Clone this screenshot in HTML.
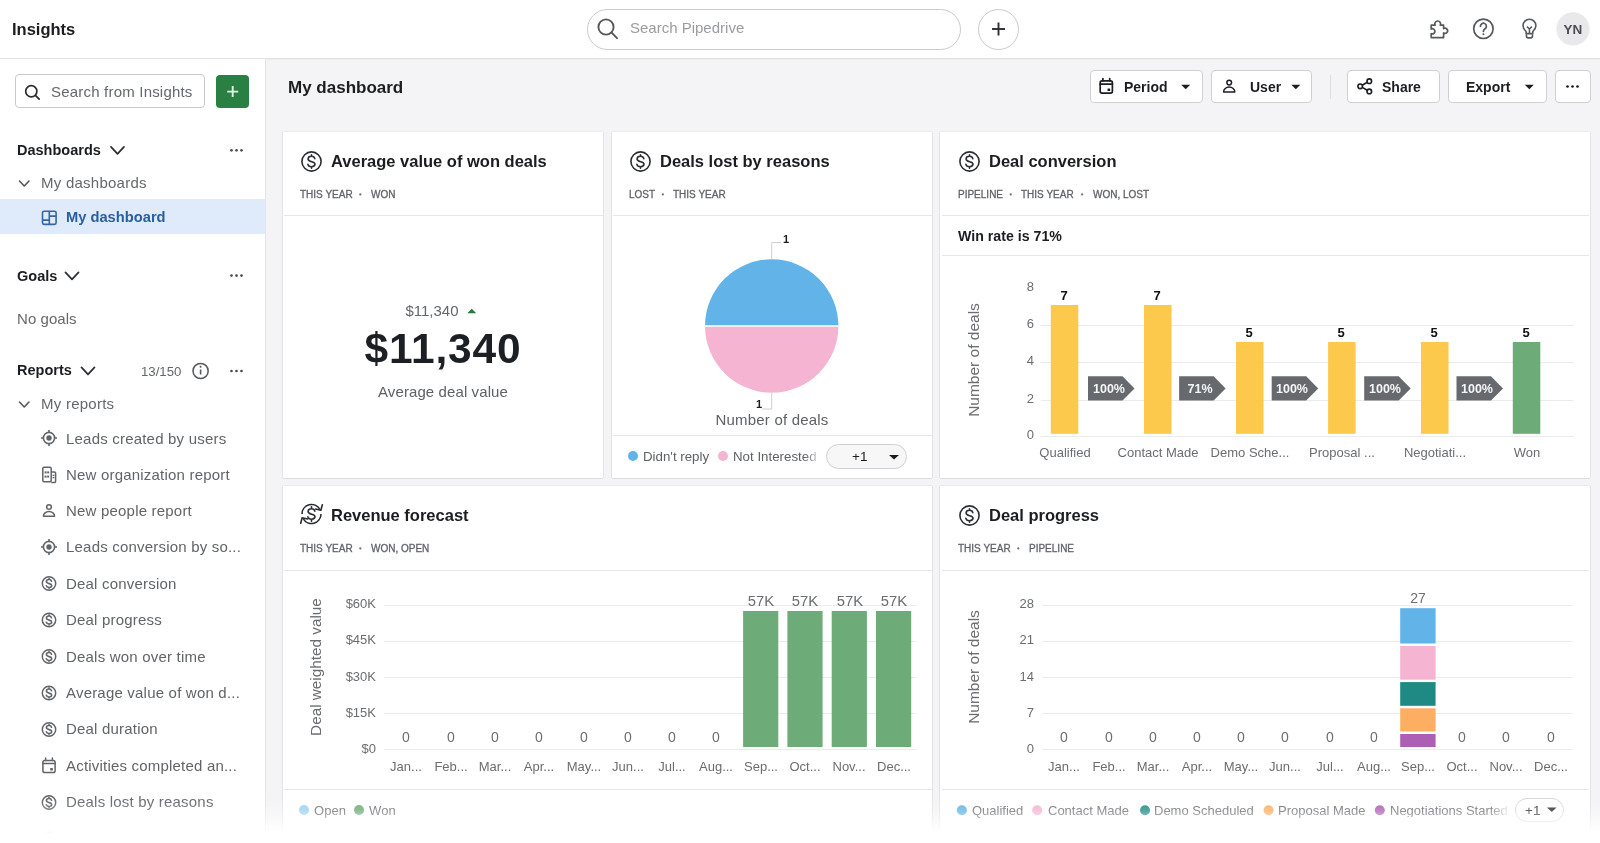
<!DOCTYPE html>
<html><head><meta charset="utf-8"><title>Insights</title>
<style>
html,body{margin:0;padding:0;width:1600px;height:843px;overflow:hidden;background:#f4f4f6;}
body{position:relative;font-family:"Liberation Sans", sans-serif;}
.t{position:absolute;line-height:1;white-space:nowrap;will-change:transform;}
svg.ov{position:absolute;left:0;top:0;}
</style></head><body>
<div style="position:absolute;left:0px;top:0px;width:1600px;height:843px;background:#f4f4f6;"></div>
<div style="position:absolute;left:0px;top:0px;width:1600px;height:58px;background:#fff;border-bottom:1px solid #e2e2e5;box-shadow:0 1px 1px rgba(0,0,0,0.03);"></div>
<div style="position:absolute;left:0px;top:59px;width:266px;height:784px;background:#fff;border-right:1px solid #e5e5e8;box-sizing:border-box;"></div>
<div style="position:absolute;left:587px;top:9px;width:374px;height:41px;border:1px solid #c9cacc;border-radius:21px;box-sizing:border-box;background:#fff;"></div>
<div style="position:absolute;left:977.5px;top:9px;width:41px;height:41px;border:1px solid #c9cacc;border-radius:50%;box-sizing:border-box;background:#fff;"></div>
<div style="position:absolute;left:15px;top:74px;width:190px;height:34px;border:1px solid #c9cacc;border-radius:4px;box-sizing:border-box;"></div>
<div style="position:absolute;left:216px;top:75px;width:33px;height:33px;background:#2a7f43;border-radius:4px;"></div>
<div style="position:absolute;left:0px;top:199px;width:265px;height:35px;background:#dfebfb;"></div>
<div style="position:absolute;left:1090px;top:70px;width:113px;height:33px;background:#fff;border:1px solid #cfd0d3;border-radius:4px;box-sizing:border-box;"></div>
<div style="position:absolute;left:1211px;top:70px;width:101px;height:33px;background:#fff;border:1px solid #cfd0d3;border-radius:4px;box-sizing:border-box;"></div>
<div style="position:absolute;left:1330px;top:75px;width:1px;height:24px;background:#dcdde0;"></div>
<div style="position:absolute;left:1347px;top:70px;width:93px;height:33px;background:#fff;border:1px solid #cfd0d3;border-radius:4px;box-sizing:border-box;"></div>
<div style="position:absolute;left:1448px;top:70px;width:99px;height:33px;background:#fff;border:1px solid #cfd0d3;border-radius:4px;box-sizing:border-box;"></div>
<div style="position:absolute;left:1554.5px;top:70px;width:36px;height:33px;background:#fff;border:1px solid #cfd0d3;border-radius:4px;box-sizing:border-box;"></div>
<div style="position:absolute;left:282px;top:131px;width:322px;height:348px;background:#fff;border:1px solid;border-color:#ececee #e4e4e6 #dedee0 #e4e4e6;border-radius:2px;box-sizing:border-box;"></div>
<div style="position:absolute;left:284px;top:215px;width:319px;height:1px;background:#e7e7e9;"></div>
<div style="position:absolute;left:611px;top:131px;width:322px;height:348px;background:#fff;border:1px solid;border-color:#ececee #e4e4e6 #dedee0 #e4e4e6;border-radius:2px;box-sizing:border-box;"></div>
<div style="position:absolute;left:613px;top:215px;width:319px;height:1px;background:#e7e7e9;"></div>
<div style="position:absolute;left:613px;top:435px;width:319px;height:1px;background:#e7e7e9;"></div>
<div style="position:absolute;left:826px;top:444px;width:81px;height:25px;border:1px solid #cfd0d3;border-radius:13px;box-sizing:border-box;background:#f7f7f8;"></div>
<div style="position:absolute;left:939px;top:131px;width:652px;height:348px;background:#fff;border:1px solid;border-color:#ececee #e4e4e6 #dedee0 #e4e4e6;border-radius:2px;box-sizing:border-box;"></div>
<div style="position:absolute;left:942px;top:215px;width:647px;height:1px;background:#e7e7e9;"></div>
<div style="position:absolute;left:942px;top:255px;width:647px;height:1px;background:#e7e7e9;"></div>
<div style="position:absolute;left:1041px;top:325.3px;width:533px;height:1px;background:#ebebed;"></div>
<div style="position:absolute;left:1041px;top:362.4px;width:533px;height:1px;background:#ebebed;"></div>
<div style="position:absolute;left:1041px;top:399.6px;width:533px;height:1px;background:#ebebed;"></div>
<div style="position:absolute;left:1041px;top:436.2px;width:533px;height:1px;background:#ebebed;"></div>
<div style="position:absolute;left:282px;top:485px;width:651px;height:358px;background:#fff;border:1px solid;border-color:#ececee #e4e4e6 #dedee0 #e4e4e6;border-radius:2px;box-sizing:border-box;"></div>
<div style="position:absolute;left:284px;top:570px;width:648px;height:1px;background:#e7e7e9;"></div>
<div style="position:absolute;left:384px;top:604.9px;width:531.6px;height:1px;background:#ebebed;"></div>
<div style="position:absolute;left:384px;top:641px;width:531.6px;height:1px;background:#ebebed;"></div>
<div style="position:absolute;left:384px;top:677.2px;width:531.6px;height:1px;background:#ebebed;"></div>
<div style="position:absolute;left:384px;top:713.3px;width:531.6px;height:1px;background:#ebebed;"></div>
<div style="position:absolute;left:384px;top:749.4px;width:531.6px;height:1px;background:#ebebed;"></div>
<div style="position:absolute;left:284px;top:789px;width:648px;height:1px;background:#e7e7e9;"></div>
<div style="position:absolute;left:939px;top:485px;width:652px;height:358px;background:#fff;border:1px solid;border-color:#ececee #e4e4e6 #dedee0 #e4e4e6;border-radius:2px;box-sizing:border-box;"></div>
<div style="position:absolute;left:942px;top:570px;width:647px;height:1px;background:#e7e7e9;"></div>
<div style="position:absolute;left:1042.4px;top:604.9px;width:530.0999999999999px;height:1px;background:#ebebed;"></div>
<div style="position:absolute;left:1042.4px;top:641px;width:530.0999999999999px;height:1px;background:#ebebed;"></div>
<div style="position:absolute;left:1042.4px;top:677.2px;width:530.0999999999999px;height:1px;background:#ebebed;"></div>
<div style="position:absolute;left:1042.4px;top:713.3px;width:530.0999999999999px;height:1px;background:#ebebed;"></div>
<div style="position:absolute;left:1042.4px;top:749.4px;width:530.0999999999999px;height:1px;background:#ebebed;"></div>
<div style="position:absolute;left:942px;top:789px;width:647px;height:1px;background:#e7e7e9;"></div>
<div style="position:absolute;left:1515px;top:798px;width:49px;height:24px;border:1px solid #d6d7da;border-radius:12px;box-sizing:border-box;background:#fff;"></div>
<svg class="ov" width="1600" height="843" viewBox="0 0 1600 843">
<circle cx="606" cy="27" r="7.6" fill="none" stroke="#55585c" stroke-width="1.9"/>
<line x1="611.6" y1="32.6" x2="617" y2="38.2" stroke="#55585c" stroke-width="1.9" stroke-linecap="round"/>
<line x1="992" y1="29" x2="1005" y2="29" stroke="#2a2d31" stroke-width="1.9"/>
<line x1="998.5" y1="22.5" x2="998.5" y2="35.5" stroke="#2a2d31" stroke-width="1.9"/>
<path d="M1431.2 25.2 H1435.1 A2.9 2.9 0 1 1 1440.3 25.2 H1443.6 V28.6 A2.6 2.6 0 1 1 1443.6 33.0 V37.6 H1431.2 V33.7 A2.6 2.6 0 1 0 1431.2 29 Z" fill="none" stroke="#55585c" stroke-width="1.7" stroke-linejoin="round"/>
<circle cx="1483.4" cy="28.8" r="9.7" fill="none" stroke="#55585c" stroke-width="1.7"/>
<path d="M1480.4 26.3 a3 3 0 1 1 4.6 2.5 c-1.2 0.8 -1.6 1.3 -1.6 2.6" fill="none" stroke="#55585c" stroke-width="1.7" stroke-linecap="round"/>
<circle cx="1483.4" cy="34.3" r="1" fill="#55585c"/>
<path d="M1526.1 33.6 v-2.1 c-1.9 -1.7 -3.1 -3.5 -3.1 -5.8 a6.45 6.45 0 0 1 12.9 0 c0 2.3 -1.2 4.1 -3.1 5.8 v2.1 z" fill="none" stroke="#55585c" stroke-width="1.6" stroke-linejoin="round"/>
<path d="M1526.4 34.2 v1.9 a1.8 1.8 0 0 0 1.8 1.8 h2.5 a1.8 1.8 0 0 0 1.8 -1.8 v-1.9" fill="none" stroke="#55585c" stroke-width="1.6"/>
<path d="M1527 26.6 l2.45 2.4 l2.45 -2.4 M1529.45 29 v4.2" fill="none" stroke="#55585c" stroke-width="1.5"/>
<circle cx="1573" cy="28.9" r="16.6" fill="#e9e9eb"/>
<circle cx="31.3" cy="91.3" r="5.6" fill="none" stroke="#2a2d31" stroke-width="1.7"/>
<line x1="35.4" y1="95.4" x2="39.2" y2="99.2" stroke="#2a2d31" stroke-width="1.7" stroke-linecap="round"/>
<path d="M227.2 91.6 h11 M232.7 86.1 v11" stroke="#d9f5dd" stroke-width="1.9"/>
<path d="M111 146.8 l6.5 7 l6.5 -7" fill="none" stroke="#2a2d31" stroke-width="1.7" stroke-linecap="round" stroke-linejoin="round"/>
<circle cx="231.5" cy="150.3" r="1.35" fill="#4a4d52"/>
<circle cx="236.5" cy="150.3" r="1.35" fill="#4a4d52"/>
<circle cx="241.5" cy="150.3" r="1.35" fill="#4a4d52"/>
<path d="M19.5 181 l4.75 5 l4.75 -5" fill="none" stroke="#55585c" stroke-width="1.6" stroke-linecap="round" stroke-linejoin="round"/>
<rect x="42.5" y="211.2" width="13.6" height="13.2" rx="1.6" fill="none" stroke="#3565a5" stroke-width="1.6"/>
<path d="M49.3 211.2 v13.2 M42.5 220.1 h6.8 M49.3 216.1 h6.8" stroke="#3565a5" stroke-width="1.6"/>
<path d="M65.5 272.3 l6.5 7 l6.5 -7" fill="none" stroke="#2a2d31" stroke-width="1.7" stroke-linecap="round" stroke-linejoin="round"/>
<circle cx="231.5" cy="275.6" r="1.35" fill="#4a4d52"/>
<circle cx="236.5" cy="275.6" r="1.35" fill="#4a4d52"/>
<circle cx="241.5" cy="275.6" r="1.35" fill="#4a4d52"/>
<path d="M81.5 367.3 l6.5 7 l6.5 -7" fill="none" stroke="#2a2d31" stroke-width="1.7" stroke-linecap="round" stroke-linejoin="round"/>
<circle cx="200.6" cy="371" r="7.6" fill="none" stroke="#55585c" stroke-width="1.5"/>
<path d="M200.6 369.5 v5" stroke="#55585c" stroke-width="1.6"/><circle cx="200.6" cy="366.7" r="1" fill="#55585c"/>
<circle cx="231.5" cy="371" r="1.35" fill="#4a4d52"/>
<circle cx="236.5" cy="371" r="1.35" fill="#4a4d52"/>
<circle cx="241.5" cy="371" r="1.35" fill="#4a4d52"/>
<path d="M19.5 402 l4.75 5 l4.75 -5" fill="none" stroke="#55585c" stroke-width="1.6" stroke-linecap="round" stroke-linejoin="round"/>
<circle cx="49" cy="438" r="5.6" fill="none" stroke="#616469" stroke-width="1.6"/>
<circle cx="49" cy="438" r="2.7" fill="#616469"/>
<path d="M49 430 v2.4 M49 443.6 v2.4 M41 438 h2.4 M54.6 438 h2.4" stroke="#616469" stroke-width="1.6"/>
<rect x="42.8" y="467.2" width="8.4" height="14.6" rx="1.2" fill="none" stroke="#616469" stroke-width="1.5"/>
<path d="M51.2 471.9 h3.2 a1.2 1.2 0 0 1 1.2 1.2 v8.2 a1.2 1.2 0 0 1 -1.2 1.2 h-3.2" fill="none" stroke="#616469" stroke-width="1.5"/>
<rect x="44.599999999999994" y="471.40000000000003" width="2" height="2" fill="#616469"/>
<rect x="47.199999999999996" y="471.40000000000003" width="2" height="2" fill="#616469"/>
<rect x="44.599999999999994" y="475.6" width="2" height="2" fill="#616469"/>
<rect x="47.199999999999996" y="475.6" width="2" height="2" fill="#616469"/>
<path d="M52.6 475.4 h1.8 M52.6 477.6 h1.8" stroke="#616469" stroke-width="1.1"/>
<circle cx="49" cy="507" r="2.35" fill="none" stroke="#616469" stroke-width="1.5"/>
<path d="M43.4 516.3 a5.6 4.9 0 0 1 11.2 0 z" fill="none" stroke="#616469" stroke-width="1.5" stroke-linejoin="round"/>
<circle cx="49" cy="547" r="5.6" fill="none" stroke="#616469" stroke-width="1.6"/>
<circle cx="49" cy="547" r="2.7" fill="#616469"/>
<path d="M49 539 v2.4 M49 552.6 v2.4 M41 547 h2.4 M54.6 547 h2.4" stroke="#616469" stroke-width="1.6"/>
<circle cx="49" cy="583.5" r="6.7" fill="none" stroke="#616469" stroke-width="1.5"/>
<path d="M51.51 581.30 C51.28 580.23 50.37 579.55 49.00 579.55 C47.48 579.55 46.42 580.38 46.42 581.52 C46.42 584.18 51.66 583.12 51.66 585.48 C51.66 586.69 50.52 587.45 49.00 587.45 C47.56 587.45 46.49 586.77 46.26 585.70 M49.00 579.55 L49.00 578.41 M49.00 587.45 L49.00 588.59" fill="none" stroke="#616469" stroke-width="1.6" stroke-linecap="round" stroke-linejoin="round"/>
<circle cx="49" cy="620" r="6.7" fill="none" stroke="#616469" stroke-width="1.5"/>
<path d="M51.51 617.80 C51.28 616.73 50.37 616.05 49.00 616.05 C47.48 616.05 46.42 616.88 46.42 618.02 C46.42 620.68 51.66 619.62 51.66 621.98 C51.66 623.19 50.52 623.95 49.00 623.95 C47.56 623.95 46.49 623.27 46.26 622.20 M49.00 616.05 L49.00 614.91 M49.00 623.95 L49.00 625.09" fill="none" stroke="#616469" stroke-width="1.6" stroke-linecap="round" stroke-linejoin="round"/>
<circle cx="49" cy="656.5" r="6.7" fill="none" stroke="#616469" stroke-width="1.5"/>
<path d="M51.51 654.30 C51.28 653.23 50.37 652.55 49.00 652.55 C47.48 652.55 46.42 653.38 46.42 654.52 C46.42 657.18 51.66 656.12 51.66 658.48 C51.66 659.69 50.52 660.45 49.00 660.45 C47.56 660.45 46.49 659.77 46.26 658.70 M49.00 652.55 L49.00 651.41 M49.00 660.45 L49.00 661.59" fill="none" stroke="#616469" stroke-width="1.6" stroke-linecap="round" stroke-linejoin="round"/>
<circle cx="49" cy="693" r="6.7" fill="none" stroke="#616469" stroke-width="1.5"/>
<path d="M51.51 690.80 C51.28 689.73 50.37 689.05 49.00 689.05 C47.48 689.05 46.42 689.88 46.42 691.02 C46.42 693.68 51.66 692.62 51.66 694.98 C51.66 696.19 50.52 696.95 49.00 696.95 C47.56 696.95 46.49 696.27 46.26 695.20 M49.00 689.05 L49.00 687.91 M49.00 696.95 L49.00 698.09" fill="none" stroke="#616469" stroke-width="1.6" stroke-linecap="round" stroke-linejoin="round"/>
<circle cx="49" cy="729.5" r="6.7" fill="none" stroke="#616469" stroke-width="1.5"/>
<path d="M51.51 727.30 C51.28 726.23 50.37 725.55 49.00 725.55 C47.48 725.55 46.42 726.38 46.42 727.52 C46.42 730.18 51.66 729.12 51.66 731.48 C51.66 732.69 50.52 733.45 49.00 733.45 C47.56 733.45 46.49 732.77 46.26 731.70 M49.00 725.55 L49.00 724.41 M49.00 733.45 L49.00 734.59" fill="none" stroke="#616469" stroke-width="1.6" stroke-linecap="round" stroke-linejoin="round"/>
<rect x="42.9" y="760.4" width="12.2" height="12.2" rx="1.8" fill="none" stroke="#616469" stroke-width="1.5"/>
<path d="M42.9 763.6 h12.2 M45.6 758.1 v2.4 M52.4 758.1 v2.4" stroke="#616469" stroke-width="1.5" stroke-linecap="round"/>
<rect x="50.2" y="767.9" width="2.7" height="2.6" rx="0.5" fill="#616469"/>
<circle cx="49" cy="802.5" r="6.7" fill="none" stroke="#616469" stroke-width="1.5"/>
<path d="M51.51 800.30 C51.28 799.23 50.37 798.55 49.00 798.55 C47.48 798.55 46.42 799.38 46.42 800.52 C46.42 803.18 51.66 802.12 51.66 804.48 C51.66 805.69 50.52 806.45 49.00 806.45 C47.56 806.45 46.49 805.77 46.26 804.70 M49.00 798.55 L49.00 797.41 M49.00 806.45 L49.00 807.59" fill="none" stroke="#616469" stroke-width="1.6" stroke-linecap="round" stroke-linejoin="round"/>
<circle cx="49" cy="839" r="6.7" fill="none" stroke="#616469" stroke-width="1.5"/>
<path d="M51.51 836.80 C51.28 835.73 50.37 835.05 49.00 835.05 C47.48 835.05 46.42 835.88 46.42 837.02 C46.42 839.68 51.66 838.62 51.66 840.98 C51.66 842.19 50.52 842.95 49.00 842.95 C47.56 842.95 46.49 842.27 46.26 841.20 M49.00 835.05 L49.00 833.91 M49.00 842.95 L49.00 844.09" fill="none" stroke="#616469" stroke-width="1.6" stroke-linecap="round" stroke-linejoin="round"/>
<rect x="1100.2" y="80.9" width="12.2" height="12.2" rx="1.8" fill="none" stroke="#1b1d21" stroke-width="1.7"/>
<path d="M1100.2 84.1 h12.2 M1102.8999999999999 78.6 v2.4 M1109.7 78.6 v2.4" stroke="#1b1d21" stroke-width="1.7" stroke-linecap="round"/>
<rect x="1107.5" y="88.4" width="2.7" height="2.6" rx="0.5" fill="#1b1d21"/>
<path d="M1181.2 84.8 h9 l-4.5 4.5 z" fill="#1b1d21"/>
<circle cx="1229.2" cy="82.6" r="2.35" fill="none" stroke="#1b1d21" stroke-width="1.5"/>
<path d="M1223.6000000000001 91.89999999999999 a5.6 4.9 0 0 1 11.2 0 z" fill="none" stroke="#1b1d21" stroke-width="1.5" stroke-linejoin="round"/>
<path d="M1291.3 84.8 h9 l-4.5 4.5 z" fill="#1b1d21"/>
<circle cx="1360.2" cy="86.3" r="2.3" fill="none" stroke="#1b1d21" stroke-width="1.6"/><circle cx="1369.3" cy="81.2" r="2.3" fill="none" stroke="#1b1d21" stroke-width="1.6"/><circle cx="1369.3" cy="91.4" r="2.3" fill="none" stroke="#1b1d21" stroke-width="1.6"/><path d="M1362.2 85.2 l5.1 -2.9 M1362.2 87.4 l5.1 2.9" stroke="#1b1d21" stroke-width="1.6"/>
<path d="M1524.8 84.8 h9 l-4.5 4.5 z" fill="#1b1d21"/>
<circle cx="1567.5" cy="86.5" r="1.35" fill="#1b1d21"/>
<circle cx="1572.5" cy="86.5" r="1.35" fill="#1b1d21"/>
<circle cx="1577.5" cy="86.5" r="1.35" fill="#1b1d21"/>
<circle cx="311.5" cy="161.5" r="9.6" fill="none" stroke="#2a2d31" stroke-width="1.6"/>
<path d="M314.80 158.60 C314.50 157.20 313.30 156.30 311.50 156.30 C309.50 156.30 308.10 157.40 308.10 158.90 C308.10 162.40 315.00 161.00 315.00 164.10 C315.00 165.70 313.50 166.70 311.50 166.70 C309.60 166.70 308.20 165.80 307.90 164.40 M311.50 156.30 L311.50 154.80 M311.50 166.70 L311.50 168.20" fill="none" stroke="#2a2d31" stroke-width="1.6" stroke-linecap="round" stroke-linejoin="round"/>
<circle cx="360.31" cy="194.4" r="1.1" fill="#6d7075"/>
<path d="M467.3 313.2 l4.45 -4.5 l4.45 4.5 z" fill="#1f7a3c"/>
<circle cx="640.5" cy="161.5" r="9.6" fill="none" stroke="#2a2d31" stroke-width="1.6"/>
<path d="M643.80 158.60 C643.50 157.20 642.30 156.30 640.50 156.30 C638.50 156.30 637.10 157.40 637.10 158.90 C637.10 162.40 644.00 161.00 644.00 164.10 C644.00 165.70 642.50 166.70 640.50 166.70 C638.60 166.70 637.20 165.80 636.90 164.40 M640.50 156.30 L640.50 154.80 M640.50 166.70 L640.50 168.20" fill="none" stroke="#2a2d31" stroke-width="1.6" stroke-linecap="round" stroke-linejoin="round"/>
<circle cx="662.83" cy="194.4" r="1.1" fill="#6d7075"/>
<path d="M705 326 A66.7 66.7 0 0 1 838.4 326 z" fill="#62b3e7"/>
<path d="M705 326 A66.7 66.7 0 0 0 838.4 326 z" fill="#f4b4d2"/>
<line x1="705" y1="326" x2="838.4" y2="326" stroke="#fff" stroke-width="1.5"/>
<path d="M771.7 259 v-16.5 h9.5" fill="none" stroke="#cfd0d2" stroke-width="1"/>
<path d="M771.7 393 v16 h-9.5" fill="none" stroke="#cfd0d2" stroke-width="1"/>
<circle cx="633" cy="456" r="5" fill="#62b3e7"/><circle cx="723" cy="456" r="5" fill="#f4b4d2"/>
<path d="M889 455 h10 l-5.0 4.6 z" fill="#1b1d21"/>
<circle cx="969.5" cy="161.5" r="9.6" fill="none" stroke="#2a2d31" stroke-width="1.6"/>
<path d="M972.80 158.60 C972.50 157.20 971.30 156.30 969.50 156.30 C967.50 156.30 966.10 157.40 966.10 158.90 C966.10 162.40 973.00 161.00 973.00 164.10 C973.00 165.70 971.50 166.70 969.50 166.70 C967.60 166.70 966.20 165.80 965.90 164.40 M969.50 156.30 L969.50 154.80 M969.50 166.70 L969.50 168.20" fill="none" stroke="#2a2d31" stroke-width="1.6" stroke-linecap="round" stroke-linejoin="round"/>
<circle cx="1010.73" cy="194.4" r="1.1" fill="#6d7075"/>
<circle cx="1082.14" cy="194.4" r="1.1" fill="#6d7075"/>
<rect x="1050.8" y="305" width="27.5" height="128.8" fill="#fcc94c"/>
<rect x="1144" y="305" width="27.5" height="128.8" fill="#fcc94c"/>
<rect x="1236" y="342" width="27.5" height="91.80000000000001" fill="#fcc94c"/>
<rect x="1328.1" y="342" width="27.5" height="91.80000000000001" fill="#fcc94c"/>
<rect x="1421" y="342" width="27.5" height="91.80000000000001" fill="#fcc94c"/>
<rect x="1512.8" y="342" width="27.5" height="91.80000000000001" fill="#6dab78"/>
<path d="M1088 376.3 h34.5 l12 12.1 l-12 12.1 h-34.5 z" fill="#66696d"/>
<path d="M1179.1 376.3 h34.5 l12 12.1 l-12 12.1 h-34.5 z" fill="#66696d"/>
<path d="M1271.7 376.3 h34.5 l12 12.1 l-12 12.1 h-34.5 z" fill="#66696d"/>
<path d="M1364.2 376.3 h34.5 l12 12.1 l-12 12.1 h-34.5 z" fill="#66696d"/>
<path d="M1456.5 376.3 h34.5 l12 12.1 l-12 12.1 h-34.5 z" fill="#66696d"/>
<path d="M302.0 514 A9.5 9.5 0 0 1 319.8 509.4" fill="none" stroke="#2a2d31" stroke-width="1.6"/>
<path d="M321.0 514 A9.5 9.5 0 0 1 303.2 518.6" fill="none" stroke="#2a2d31" stroke-width="1.6"/>
<path d="M322.3 504.7 L320.9 510.2 L315.5 509.0" fill="none" stroke="#2a2d31" stroke-width="1.6" stroke-linejoin="round" stroke-linecap="round"/>
<path d="M300.7 523.3 L302.1 517.8 L307.5 519.0" fill="none" stroke="#2a2d31" stroke-width="1.6" stroke-linejoin="round" stroke-linecap="round"/>
<path d="M314.80 511.10 C314.50 509.70 313.30 508.80 311.50 508.80 C309.50 508.80 308.10 509.90 308.10 511.40 C308.10 514.90 315.00 513.50 315.00 516.60 C315.00 518.20 313.50 519.20 311.50 519.20 C309.60 519.20 308.20 518.30 307.90 516.90 M311.50 508.80 L311.50 506.80 M311.50 519.20 L311.50 521.20" fill="none" stroke="#2a2d31" stroke-width="1.6" stroke-linecap="round" stroke-linejoin="round"/>
<circle cx="360.31" cy="548.4" r="1.1" fill="#6d7075"/>
<rect x="743.1" y="611" width="35.2" height="136" fill="#6dab78"/>
<rect x="787.4" y="611" width="35.2" height="136" fill="#6dab78"/>
<rect x="831.6999999999999" y="611" width="35.2" height="136" fill="#6dab78"/>
<rect x="875.9999999999999" y="611" width="35.2" height="136" fill="#6dab78"/>
<circle cx="304" cy="810" r="5" fill="#9fd0f3"/><circle cx="359" cy="810" r="5" fill="#6dab78"/>
<circle cx="969.5" cy="515.5" r="9.6" fill="none" stroke="#2a2d31" stroke-width="1.6"/>
<path d="M972.80 512.60 C972.50 511.20 971.30 510.30 969.50 510.30 C967.50 510.30 966.10 511.40 966.10 512.90 C966.10 516.40 973.00 515.00 973.00 518.10 C973.00 519.70 971.50 520.70 969.50 520.70 C967.60 520.70 966.20 519.80 965.90 518.40 M969.50 510.30 L969.50 508.80 M969.50 520.70 L969.50 522.20" fill="none" stroke="#2a2d31" stroke-width="1.6" stroke-linecap="round" stroke-linejoin="round"/>
<circle cx="1018.31" cy="548.4" r="1.1" fill="#6d7075"/>
<rect x="1400.2" y="608.2" width="35.4" height="35.3" fill="#62b3e7"/>
<rect x="1400.2" y="646" width="35.4" height="33.7" fill="#f4b4d2"/>
<rect x="1400.2" y="682.1" width="35.4" height="23.7" fill="#1f8a84"/>
<rect x="1400.2" y="708.3" width="35.4" height="23.2" fill="#fcae63"/>
<rect x="1400.2" y="734" width="35.4" height="13.0" fill="#ad5fb6"/>
<circle cx="961.9" cy="810.3" r="5" fill="#62b3e7"/>
<circle cx="1037.2" cy="810.3" r="5" fill="#f4b4d2"/>
<circle cx="1145" cy="810.3" r="5" fill="#1f8a84"/>
<circle cx="1268.6" cy="810.3" r="5" fill="#fcae63"/>
<circle cx="1379.8" cy="810.3" r="5" fill="#ad5fb6"/>
<path d="M1547 807.5 h9.5 l-4.75 4.5 z" fill="#2a2d31"/>
</svg>
<div class="t" style="top:21.00px;font-size:16.5px;font-weight:bold;color:#1b1d21;left:11.80px;">Insights</div>
<div class="t" style="top:20.30px;font-size:15px;font-weight:normal;color:#9a9ca0;left:629.50px;">Search Pipedrive</div>
<div class="t" style="top:23.00px;font-size:13.5px;font-weight:bold;color:#4a4d52;left:1273.20px;width:600px;text-align:center;">YN</div>
<div class="t" style="top:84.30px;font-size:15px;font-weight:normal;color:#65686c;letter-spacing:0.2px;left:50.50px;">Search from Insights</div>
<div class="t" style="top:143.00px;font-size:14.5px;font-weight:bold;color:#1b1d21;left:16.50px;">Dashboards</div>
<div class="t" style="top:175.30px;font-size:15px;font-weight:normal;color:#65686c;letter-spacing:0.25px;left:41.20px;">My dashboards</div>
<div class="t" style="top:210.00px;font-size:14.7px;font-weight:bold;color:#2a5f9f;left:66.20px;">My dashboard</div>
<div class="t" style="top:269.00px;font-size:14.5px;font-weight:bold;color:#1b1d21;left:16.50px;">Goals</div>
<div class="t" style="top:311.30px;font-size:15px;font-weight:normal;color:#65686c;letter-spacing:0.05px;left:16.50px;">No goals</div>
<div class="t" style="top:363.00px;font-size:14.5px;font-weight:bold;color:#1b1d21;left:16.50px;">Reports</div>
<div class="t" style="top:365.00px;font-size:13.2px;font-weight:normal;color:#65686c;left:140.50px;">13/150</div>
<div class="t" style="top:396.30px;font-size:15px;font-weight:normal;color:#65686c;letter-spacing:0.25px;left:41.30px;">My reports</div>
<div class="t" style="top:431.30px;font-size:15px;font-weight:normal;color:#616468;letter-spacing:0.2px;left:66.30px;">Leads created by users</div>
<div class="t" style="top:467.30px;font-size:15px;font-weight:normal;color:#616468;letter-spacing:0.2px;left:66.30px;">New organization report</div>
<div class="t" style="top:503.30px;font-size:15px;font-weight:normal;color:#616468;letter-spacing:0.2px;left:66.30px;">New people report</div>
<div class="t" style="top:539.30px;font-size:15px;font-weight:normal;color:#616468;letter-spacing:0.2px;left:66.30px;">Leads conversion by so...</div>
<div class="t" style="top:576.30px;font-size:15px;font-weight:normal;color:#616468;letter-spacing:0.2px;left:66.30px;">Deal conversion</div>
<div class="t" style="top:612.30px;font-size:15px;font-weight:normal;color:#616468;letter-spacing:0.2px;left:66.30px;">Deal progress</div>
<div class="t" style="top:649.30px;font-size:15px;font-weight:normal;color:#616468;letter-spacing:0.2px;left:66.30px;">Deals won over time</div>
<div class="t" style="top:685.30px;font-size:15px;font-weight:normal;color:#616468;letter-spacing:0.2px;left:66.30px;">Average value of won d...</div>
<div class="t" style="top:721.30px;font-size:15px;font-weight:normal;color:#616468;letter-spacing:0.2px;left:66.30px;">Deal duration</div>
<div class="t" style="top:758.30px;font-size:15px;font-weight:normal;color:#616468;letter-spacing:0.2px;left:66.30px;">Activities completed an...</div>
<div class="t" style="top:794.30px;font-size:15px;font-weight:normal;color:#616468;letter-spacing:0.2px;left:66.30px;">Deals lost by reasons</div>
<div class="t" style="top:830.30px;font-size:15px;font-weight:normal;color:#616468;letter-spacing:0.2px;left:66.30px;">Deals won by users</div>
<div class="t" style="top:78.61px;font-size:17px;font-weight:bold;color:#1b1d21;left:288.00px;">My dashboard</div>
<div class="t" style="top:80.15px;font-size:14px;font-weight:bold;color:#1b1d21;left:1124.00px;">Period</div>
<div class="t" style="top:80.15px;font-size:14px;font-weight:bold;color:#1b1d21;left:1250.20px;">User</div>
<div class="t" style="top:80.15px;font-size:14px;font-weight:bold;color:#1b1d21;left:1381.60px;">Share</div>
<div class="t" style="top:80.15px;font-size:14px;font-weight:bold;color:#1b1d21;left:1466.10px;">Export</div>
<div class="t" style="top:153.00px;font-size:16.5px;font-weight:bold;color:#1b1d21;left:331.00px;">Average value of won deals</div>
<div class="t" style="top:189.53px;font-size:10px;font-weight:normal;color:#5f6267;left:299.50px;-webkit-text-stroke:0.3px #62656a;">THIS YEAR</div>
<div class="t" style="top:189.53px;font-size:10px;font-weight:normal;color:#5f6267;left:370.91px;-webkit-text-stroke:0.3px #62656a;">WON</div>
<div class="t" style="top:303.30px;font-size:15px;font-weight:normal;color:#63666b;left:132.00px;width:600px;text-align:center;">$11,340</div>
<div class="t" style="top:328.00px;font-size:42.5px;font-weight:bold;color:#1c1f24;letter-spacing:0.8px;left:142.90px;width:600px;text-align:center;">$11,340</div>
<div class="t" style="top:384.30px;font-size:15px;font-weight:normal;color:#5e6166;letter-spacing:0.1px;left:142.85px;width:600px;text-align:center;">Average deal value</div>
<div class="t" style="top:153.00px;font-size:16.5px;font-weight:bold;color:#1b1d21;left:660.00px;">Deals lost by reasons</div>
<div class="t" style="top:189.53px;font-size:10px;font-weight:normal;color:#5f6267;left:628.50px;-webkit-text-stroke:0.3px #62656a;">LOST</div>
<div class="t" style="top:189.53px;font-size:10px;font-weight:normal;color:#5f6267;left:673.42px;-webkit-text-stroke:0.3px #62656a;">THIS YEAR</div>
<div class="t" style="top:233.69px;font-size:11px;font-weight:bold;color:#1b1d21;left:782.80px;">1</div>
<div class="t" style="top:398.69px;font-size:11px;font-weight:bold;color:#1b1d21;left:756.00px;">1</div>
<div class="t" style="top:412.30px;font-size:15px;font-weight:normal;color:#5e6166;letter-spacing:0.2px;left:471.60px;width:600px;text-align:center;">Number of deals</div>
<div class="t" style="top:450.00px;font-size:13.3px;font-weight:normal;color:#5e6166;left:642.60px;">Didn't reply</div>
<div class="t" style="top:450.00px;font-size:13.3px;font-weight:normal;color:#5e6166;left:733.40px;-webkit-mask-image:linear-gradient(to right,#000 72px,rgba(0,0,0,0.25) 85px);">Not Interested</div>
<div class="t" style="top:450.00px;font-size:13.5px;font-weight:normal;color:#1b1d21;left:852.00px;">+1</div>
<div class="t" style="top:153.00px;font-size:16.5px;font-weight:bold;color:#1b1d21;left:989.00px;">Deal conversion</div>
<div class="t" style="top:189.53px;font-size:10px;font-weight:normal;color:#5f6267;left:957.50px;-webkit-text-stroke:0.3px #62656a;">PIPELINE</div>
<div class="t" style="top:189.53px;font-size:10px;font-weight:normal;color:#5f6267;left:1021.33px;-webkit-text-stroke:0.3px #62656a;">THIS YEAR</div>
<div class="t" style="top:189.53px;font-size:10px;font-weight:normal;color:#5f6267;left:1092.74px;-webkit-text-stroke:0.3px #62656a;">WON, LOST</div>
<div class="t" style="top:229.00px;font-size:14.2px;font-weight:bold;color:#1b1d21;left:957.60px;">Win rate is 71%</div>
<div class="t" style="top:279.99px;font-size:13px;font-weight:normal;color:#6a6d71;left:434.20px;width:600px;text-align:right;">8</div>
<div class="t" style="top:316.99px;font-size:13px;font-weight:normal;color:#6a6d71;left:434.20px;width:600px;text-align:right;">6</div>
<div class="t" style="top:353.99px;font-size:13px;font-weight:normal;color:#6a6d71;left:434.20px;width:600px;text-align:right;">4</div>
<div class="t" style="top:391.99px;font-size:13px;font-weight:normal;color:#6a6d71;left:434.20px;width:600px;text-align:right;">2</div>
<div class="t" style="top:427.99px;font-size:13px;font-weight:normal;color:#6a6d71;left:434.20px;width:600px;text-align:right;">0</div>
<div class="t" style="left:873.7px;top:351px;width:200px;text-align:center;font-size:15.5px;line-height:18px;color:#6a6d71;transform:rotate(-90deg);">Number of deals</div>
<div class="t" style="top:288.99px;font-size:13px;font-weight:bold;color:#111;left:764.05px;width:600px;text-align:center;">7</div>
<div class="t" style="top:445.99px;font-size:13px;font-weight:normal;color:#6a6d71;left:764.55px;width:600px;text-align:center;">Qualified</div>
<div class="t" style="top:288.99px;font-size:13px;font-weight:bold;color:#111;left:857.25px;width:600px;text-align:center;">7</div>
<div class="t" style="top:445.99px;font-size:13px;font-weight:normal;color:#6a6d71;left:857.75px;width:600px;text-align:center;">Contact Made</div>
<div class="t" style="top:325.99px;font-size:13px;font-weight:bold;color:#111;left:949.25px;width:600px;text-align:center;">5</div>
<div class="t" style="top:445.99px;font-size:13px;font-weight:normal;color:#6a6d71;left:949.75px;width:600px;text-align:center;">Demo Sche...</div>
<div class="t" style="top:325.99px;font-size:13px;font-weight:bold;color:#111;left:1041.35px;width:600px;text-align:center;">5</div>
<div class="t" style="top:445.99px;font-size:13px;font-weight:normal;color:#6a6d71;left:1041.85px;width:600px;text-align:center;">Proposal ...</div>
<div class="t" style="top:325.99px;font-size:13px;font-weight:bold;color:#111;left:1134.25px;width:600px;text-align:center;">5</div>
<div class="t" style="top:445.99px;font-size:13px;font-weight:normal;color:#6a6d71;left:1134.75px;width:600px;text-align:center;">Negotiati...</div>
<div class="t" style="top:325.99px;font-size:13px;font-weight:bold;color:#111;left:1226.05px;width:600px;text-align:center;">5</div>
<div class="t" style="top:445.99px;font-size:13px;font-weight:normal;color:#6a6d71;left:1226.55px;width:600px;text-align:center;">Won</div>
<div class="t" style="top:383.00px;font-size:12.5px;font-weight:bold;color:#f6f6f7;left:808.50px;width:600px;text-align:center;">100%</div>
<div class="t" style="top:383.00px;font-size:12.5px;font-weight:bold;color:#f6f6f7;left:899.60px;width:600px;text-align:center;">71%</div>
<div class="t" style="top:383.00px;font-size:12.5px;font-weight:bold;color:#f6f6f7;left:992.20px;width:600px;text-align:center;">100%</div>
<div class="t" style="top:383.00px;font-size:12.5px;font-weight:bold;color:#f6f6f7;left:1084.70px;width:600px;text-align:center;">100%</div>
<div class="t" style="top:383.00px;font-size:12.5px;font-weight:bold;color:#f6f6f7;left:1177.00px;width:600px;text-align:center;">100%</div>
<div class="t" style="top:507.00px;font-size:16.5px;font-weight:bold;color:#1b1d21;left:331.00px;">Revenue forecast</div>
<div class="t" style="top:543.53px;font-size:10px;font-weight:normal;color:#5f6267;left:299.50px;-webkit-text-stroke:0.3px #62656a;">THIS YEAR</div>
<div class="t" style="top:543.53px;font-size:10px;font-weight:normal;color:#5f6267;left:370.91px;-webkit-text-stroke:0.3px #62656a;">WON, OPEN</div>
<div class="t" style="top:596.99px;font-size:13px;font-weight:normal;color:#6a6d71;left:-224.30px;width:600px;text-align:right;">$60K</div>
<div class="t" style="top:632.99px;font-size:13px;font-weight:normal;color:#6a6d71;left:-224.30px;width:600px;text-align:right;">$45K</div>
<div class="t" style="top:669.99px;font-size:13px;font-weight:normal;color:#6a6d71;left:-224.30px;width:600px;text-align:right;">$30K</div>
<div class="t" style="top:705.99px;font-size:13px;font-weight:normal;color:#6a6d71;left:-224.30px;width:600px;text-align:right;">$15K</div>
<div class="t" style="top:741.99px;font-size:13px;font-weight:normal;color:#6a6d71;left:-224.30px;width:600px;text-align:right;">$0</div>
<div class="t" style="left:216.39999999999998px;top:658px;width:200px;text-align:center;font-size:15.3px;line-height:18px;color:#6a6d71;transform:rotate(-90deg);">Deal weighted value</div>
<div class="t" style="top:759.99px;font-size:13px;font-weight:normal;color:#6a6d71;left:106.30px;width:600px;text-align:center;">Jan...</div>
<div class="t" style="top:730.15px;font-size:14px;font-weight:normal;color:#6a6d71;left:106.30px;width:600px;text-align:center;">0</div>
<div class="t" style="top:759.99px;font-size:13px;font-weight:normal;color:#6a6d71;left:150.60px;width:600px;text-align:center;">Feb...</div>
<div class="t" style="top:730.15px;font-size:14px;font-weight:normal;color:#6a6d71;left:150.60px;width:600px;text-align:center;">0</div>
<div class="t" style="top:759.99px;font-size:13px;font-weight:normal;color:#6a6d71;left:194.90px;width:600px;text-align:center;">Mar...</div>
<div class="t" style="top:730.15px;font-size:14px;font-weight:normal;color:#6a6d71;left:194.90px;width:600px;text-align:center;">0</div>
<div class="t" style="top:759.99px;font-size:13px;font-weight:normal;color:#6a6d71;left:239.20px;width:600px;text-align:center;">Apr...</div>
<div class="t" style="top:730.15px;font-size:14px;font-weight:normal;color:#6a6d71;left:239.20px;width:600px;text-align:center;">0</div>
<div class="t" style="top:759.99px;font-size:13px;font-weight:normal;color:#6a6d71;left:283.50px;width:600px;text-align:center;">May...</div>
<div class="t" style="top:730.15px;font-size:14px;font-weight:normal;color:#6a6d71;left:283.50px;width:600px;text-align:center;">0</div>
<div class="t" style="top:759.99px;font-size:13px;font-weight:normal;color:#6a6d71;left:327.80px;width:600px;text-align:center;">Jun...</div>
<div class="t" style="top:730.15px;font-size:14px;font-weight:normal;color:#6a6d71;left:327.80px;width:600px;text-align:center;">0</div>
<div class="t" style="top:759.99px;font-size:13px;font-weight:normal;color:#6a6d71;left:372.10px;width:600px;text-align:center;">Jul...</div>
<div class="t" style="top:730.15px;font-size:14px;font-weight:normal;color:#6a6d71;left:372.10px;width:600px;text-align:center;">0</div>
<div class="t" style="top:759.99px;font-size:13px;font-weight:normal;color:#6a6d71;left:416.40px;width:600px;text-align:center;">Aug...</div>
<div class="t" style="top:730.15px;font-size:14px;font-weight:normal;color:#6a6d71;left:416.40px;width:600px;text-align:center;">0</div>
<div class="t" style="top:759.99px;font-size:13px;font-weight:normal;color:#6a6d71;left:460.70px;width:600px;text-align:center;">Sep...</div>
<div class="t" style="top:594.00px;font-size:14.8px;font-weight:normal;color:#6a6d71;left:461.00px;width:600px;text-align:center;">57K</div>
<div class="t" style="top:759.99px;font-size:13px;font-weight:normal;color:#6a6d71;left:505.00px;width:600px;text-align:center;">Oct...</div>
<div class="t" style="top:594.00px;font-size:14.8px;font-weight:normal;color:#6a6d71;left:505.30px;width:600px;text-align:center;">57K</div>
<div class="t" style="top:759.99px;font-size:13px;font-weight:normal;color:#6a6d71;left:549.30px;width:600px;text-align:center;">Nov...</div>
<div class="t" style="top:594.00px;font-size:14.8px;font-weight:normal;color:#6a6d71;left:549.60px;width:600px;text-align:center;">57K</div>
<div class="t" style="top:759.99px;font-size:13px;font-weight:normal;color:#6a6d71;left:593.60px;width:600px;text-align:center;">Dec...</div>
<div class="t" style="top:594.00px;font-size:14.8px;font-weight:normal;color:#6a6d71;left:593.90px;width:600px;text-align:center;">57K</div>
<div class="t" style="top:803.99px;font-size:13px;font-weight:normal;color:#6a6d71;letter-spacing:0.1px;left:314.10px;">Open</div>
<div class="t" style="top:803.99px;font-size:13px;font-weight:normal;color:#6a6d71;letter-spacing:0.1px;left:369.10px;">Won</div>
<div class="t" style="top:507.00px;font-size:16.5px;font-weight:bold;color:#1b1d21;left:989.00px;">Deal progress</div>
<div class="t" style="top:543.53px;font-size:10px;font-weight:normal;color:#5f6267;left:957.50px;-webkit-text-stroke:0.3px #62656a;">THIS YEAR</div>
<div class="t" style="top:543.53px;font-size:10px;font-weight:normal;color:#5f6267;left:1028.91px;-webkit-text-stroke:0.3px #62656a;">PIPELINE</div>
<div class="t" style="top:596.99px;font-size:13px;font-weight:normal;color:#6a6d71;left:433.70px;width:600px;text-align:right;">28</div>
<div class="t" style="top:632.99px;font-size:13px;font-weight:normal;color:#6a6d71;left:433.70px;width:600px;text-align:right;">21</div>
<div class="t" style="top:669.99px;font-size:13px;font-weight:normal;color:#6a6d71;left:433.70px;width:600px;text-align:right;">14</div>
<div class="t" style="top:705.99px;font-size:13px;font-weight:normal;color:#6a6d71;left:433.70px;width:600px;text-align:right;">7</div>
<div class="t" style="top:741.99px;font-size:13px;font-weight:normal;color:#6a6d71;left:433.70px;width:600px;text-align:right;">0</div>
<div class="t" style="left:874.4px;top:658px;width:200px;text-align:center;font-size:15.5px;line-height:18px;color:#6a6d71;transform:rotate(-90deg);">Number of deals</div>
<div class="t" style="top:759.99px;font-size:13px;font-weight:normal;color:#6a6d71;left:764.30px;width:600px;text-align:center;">Jan...</div>
<div class="t" style="top:730.15px;font-size:14px;font-weight:normal;color:#6a6d71;left:764.30px;width:600px;text-align:center;">0</div>
<div class="t" style="top:759.99px;font-size:13px;font-weight:normal;color:#6a6d71;left:808.50px;width:600px;text-align:center;">Feb...</div>
<div class="t" style="top:730.15px;font-size:14px;font-weight:normal;color:#6a6d71;left:808.50px;width:600px;text-align:center;">0</div>
<div class="t" style="top:759.99px;font-size:13px;font-weight:normal;color:#6a6d71;left:852.70px;width:600px;text-align:center;">Mar...</div>
<div class="t" style="top:730.15px;font-size:14px;font-weight:normal;color:#6a6d71;left:852.70px;width:600px;text-align:center;">0</div>
<div class="t" style="top:759.99px;font-size:13px;font-weight:normal;color:#6a6d71;left:896.90px;width:600px;text-align:center;">Apr...</div>
<div class="t" style="top:730.15px;font-size:14px;font-weight:normal;color:#6a6d71;left:896.90px;width:600px;text-align:center;">0</div>
<div class="t" style="top:759.99px;font-size:13px;font-weight:normal;color:#6a6d71;left:941.10px;width:600px;text-align:center;">May...</div>
<div class="t" style="top:730.15px;font-size:14px;font-weight:normal;color:#6a6d71;left:941.10px;width:600px;text-align:center;">0</div>
<div class="t" style="top:759.99px;font-size:13px;font-weight:normal;color:#6a6d71;left:985.30px;width:600px;text-align:center;">Jun...</div>
<div class="t" style="top:730.15px;font-size:14px;font-weight:normal;color:#6a6d71;left:985.30px;width:600px;text-align:center;">0</div>
<div class="t" style="top:759.99px;font-size:13px;font-weight:normal;color:#6a6d71;left:1029.50px;width:600px;text-align:center;">Jul...</div>
<div class="t" style="top:730.15px;font-size:14px;font-weight:normal;color:#6a6d71;left:1029.50px;width:600px;text-align:center;">0</div>
<div class="t" style="top:759.99px;font-size:13px;font-weight:normal;color:#6a6d71;left:1073.70px;width:600px;text-align:center;">Aug...</div>
<div class="t" style="top:730.15px;font-size:14px;font-weight:normal;color:#6a6d71;left:1073.70px;width:600px;text-align:center;">0</div>
<div class="t" style="top:759.99px;font-size:13px;font-weight:normal;color:#6a6d71;left:1117.90px;width:600px;text-align:center;">Sep...</div>
<div class="t" style="top:591.15px;font-size:14px;font-weight:normal;color:#6a6d71;left:1117.90px;width:600px;text-align:center;">27</div>
<div class="t" style="top:759.99px;font-size:13px;font-weight:normal;color:#6a6d71;left:1162.10px;width:600px;text-align:center;">Oct...</div>
<div class="t" style="top:730.15px;font-size:14px;font-weight:normal;color:#6a6d71;left:1162.10px;width:600px;text-align:center;">0</div>
<div class="t" style="top:759.99px;font-size:13px;font-weight:normal;color:#6a6d71;left:1206.30px;width:600px;text-align:center;">Nov...</div>
<div class="t" style="top:730.15px;font-size:14px;font-weight:normal;color:#6a6d71;left:1206.30px;width:600px;text-align:center;">0</div>
<div class="t" style="top:759.99px;font-size:13px;font-weight:normal;color:#6a6d71;left:1250.50px;width:600px;text-align:center;">Dec...</div>
<div class="t" style="top:730.15px;font-size:14px;font-weight:normal;color:#6a6d71;left:1250.50px;width:600px;text-align:center;">0</div>
<div class="t" style="top:803.99px;font-size:13px;font-weight:normal;color:#6a6d71;left:971.90px;">Qualified</div>
<div class="t" style="top:803.99px;font-size:13px;font-weight:normal;color:#6a6d71;left:1047.60px;">Contact Made</div>
<div class="t" style="top:803.99px;font-size:13px;font-weight:normal;color:#6a6d71;left:1154.40px;">Demo Scheduled</div>
<div class="t" style="top:803.99px;font-size:13px;font-weight:normal;color:#6a6d71;left:1278.20px;">Proposal Made</div>
<div class="t" style="top:803.99px;font-size:13px;font-weight:normal;color:#6a6d71;left:1390.00px;width:121px;overflow:hidden;-webkit-mask-image:linear-gradient(to right,#000 100px,transparent 121px);">Negotiations Started</div>
<div class="t" style="top:804.00px;font-size:13.5px;font-weight:normal;color:#2a2d31;left:1525.30px;">+1</div>
<div style="position:absolute;left:0px;top:796px;width:1600px;height:47px;background:linear-gradient(to bottom, rgba(255,255,255,0) 0px, rgba(255,255,255,0.22) 14px, rgba(255,255,255,0.7) 29px, #fff 37px, #fff 47px);"></div>
</body></html>
